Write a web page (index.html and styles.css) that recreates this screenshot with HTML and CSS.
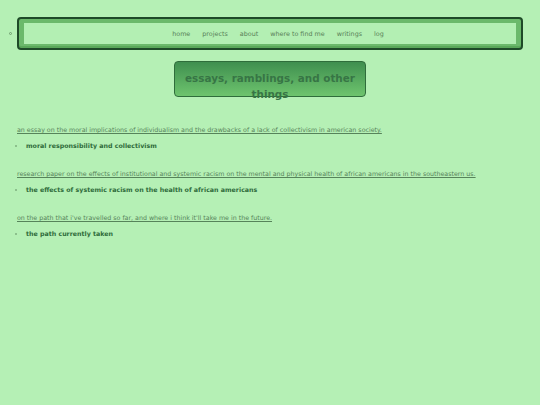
FILE: index.html
```html
<!DOCTYPE html>
<html>
<head>
<meta charset="utf-8">
<link rel="stylesheet" href="styles.css">
</head>
<body>
<div class="navrow">
  <span class="circle"></span>
  <nav class="nav">
    <div class="nav-inner">
      <a href="#">home</a>
      <a href="#">projects</a>
      <a href="#">about</a>
      <a href="#">where to find me</a>
      <a href="#">writings</a>
      <a href="#">log</a>
    </div>
  </nav>
</div>
<div class="title-wrap">
  <h1 class="title">essays, ramblings, and other things</h1>
</div>
<main class="entries">
  <section class="entry">
    <a class="desc" href="#">an essay on the moral implications of individualism and the drawbacks of a lack of collectivism in american society.</a>
    <ul class="items"><li>moral responsibility and collectivism</li></ul>
  </section>
  <section class="entry">
    <a class="desc" href="#">research paper on the effects of institutional and systemic racism on the mental and physical health of african americans in the southeastern us.</a>
    <ul class="items"><li>the effects of systemic racism on the health of african americans</li></ul>
  </section>
  <section class="entry">
    <a class="desc" href="#">on the path that i've travelled so far, and where i think it'll take me in the future.</a>
    <ul class="items"><li>the path currently taken</li></ul>
  </section>
</main>
</body>
</html>
```
FILE: styles.css
```css
html, body {
  margin: 0;
  padding: 0;
}
body {
  background: #b5f0b5;
  font-family: "DejaVu Sans", Verdana, sans-serif;
  width: 540px;
  height: 405px;
  overflow: hidden;
}
.navrow {
  display: flex;
  align-items: center;
  padding: 17px 17px 0 9px;
}
.circle {
  width: 3px;
  height: 3px;
  border: 1px solid #6e9e6e;
  border-radius: 50%;
  box-sizing: border-box;
  margin-right: 5px;
}
.nav {
  flex: 1;
  height: 33px;
  box-sizing: border-box;
  border: 2px solid #1e4a28;
  border-radius: 4px;
  background: #6bb96b;
  padding: 4px 5px 6px 5px;
  box-shadow: inset 0 -2px 0 #5aa85a;
}
.nav-inner {
  height: 21px;
  background: #b3efb3;
  display: flex;
  align-items: center;
  justify-content: center;
  gap: 12px;
  padding-left: 16px;
  box-sizing: border-box;
}
.nav-inner a {
  color: #587f58;
  font-size: 6.4px;
  text-decoration: none;
}
.title-wrap {
  display: flex;
  justify-content: center;
  padding-top: 11px;
}
.title {
  width: 192px;
  height: 36px;
  box-sizing: border-box;
  margin: 0;
  padding: 8px 6px 0;
  border: 1px solid #2f6d3b;
  border-radius: 4px;
  background: linear-gradient(#3f8f4f, #6ec46e);
  color: #377545;
  font-size: 10.4px;
  line-height: 16px;
  font-weight: bold;
  text-align: center;
}
.entries {
  padding: 28px 17px 0;
}
.entry {
  margin-bottom: 18px;
}
.desc {
  display: block;
  color: #56835a;
  font-size: 6.3px;
  line-height: 10px;
}
.items {
  margin: 6px 0 0;
  padding: 0 0 0 9px;
  list-style: disc;
}
.items li {
  color: #2e6b3a;
  font-size: 6.3px;
  line-height: 10px;
  font-weight: bold;
}
.items li::marker {
  color: #7fb07f;
}
```
